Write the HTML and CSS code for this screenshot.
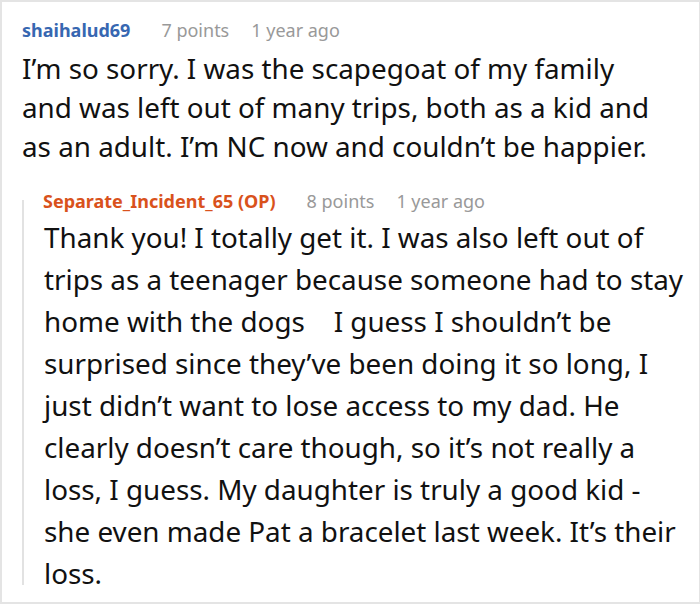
FILE: index.html
```html
<!DOCTYPE html>
<html>
<head>
<meta charset="utf-8">
<link rel="stylesheet" href="styles.css">
</head>
<body>
<div class="frame">
  <div class="comment">
    <div class="meta">
      <span class="author">shaihalud69</span>
      <span class="points">7 points</span>
      <span class="time">1 year ago</span>
    </div>
    <p class="body">I’m so sorry. I was the scapegoat of my family and was left out of many trips, both as a kid and as an adult. I’m NC now and couldn’t be happier.</p>
  </div>
  <div class="reply">
    <div class="thread-line"></div>
    <div class="reply-content">
      <div class="meta">
        <span class="author op">Separate_Incident_65 (OP)</span>
        <span class="points">8 points</span>
        <span class="time">1 year ago</span>
      </div>
      <p class="body reply-body">Thank you! I totally get it. I was also left out of trips as a teenager because someone had to stay home with the dogs &nbsp;&nbsp; I guess I shouldn’t be surprised since they’ve been doing it so long, I just didn’t want to lose access to my dad. He clearly doesn’t care though, so it’s not really a loss, I guess. My daughter is truly a good kid - she even made Pat a bracelet last week. It’s their loss.</p>
    </div>
  </div>
</div>
</body>
</html>
```

FILE: styles.css
```css
html, body {
  margin: 0;
  padding: 0;
  background: #ffffff;
}
.frame {
  box-sizing: border-box;
  width: 700px;
  height: 604px;
  border-top: 2px solid #e4e4e4;
  border-left: 2px solid #e4e4e4;
  border-right: 1px solid #e4e4e4;
  border-bottom: 2px solid #e4e4e4;
  padding: 17px 0 0 20px;
  font-family: "Noto Sans", "DejaVu Sans", sans-serif;
  overflow: hidden;
}
.meta {
  font-size: 18px;
  line-height: 22px;
  display: flex;
  align-items: baseline;
}
.author {
  font-weight: 700;
  color: #3767b1;
}
.author.op {
  color: #d9521c;
}
.points {
  color: #999999;
  margin-left: 31px;
}
.time {
  color: #999999;
  margin-left: 22px;
}
.body {
  margin: 8px 0 0 0;
  font-size: 27.8px;
  line-height: 39px;
  color: #111111;
  width: 645px;
}
.reply {
  display: flex;
  margin-top: 24px;
}
.thread-line {
  flex: none;
  width: 2px;
  margin-top: 10px;
  margin-bottom: 9px;
  background: #e2e2e2;
}
.reply-content {
  padding-left: 19px;
}
.reply-body {
  margin-top: 4px;
  line-height: 42px;
  width: 645px;
  margin-left: 1px;
}
```
